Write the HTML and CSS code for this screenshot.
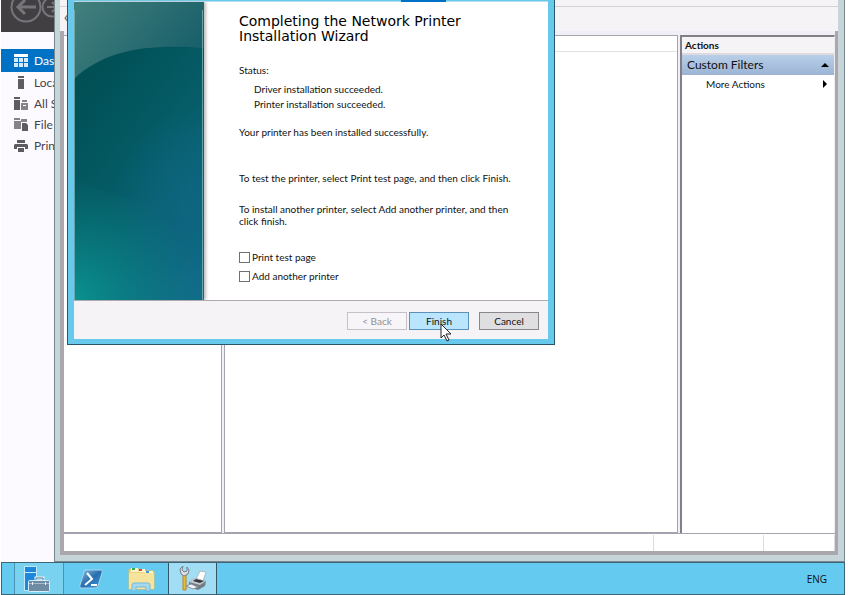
FILE: index.html
```html
<!DOCTYPE html>
<html lang="en">
<head>
<meta charset="utf-8">
<title>Print Management</title>
<link rel="stylesheet" href="styles.css">
</head>
<body>
<div class="desktop">
  <main class="workspace">
    <nav class="server-nav" aria-label="Server Manager">
      <div class="nav-header">
        <svg class="nav-arrows" viewBox="0 0 54 32" fill="none" stroke="#77757a">
          <circle cx="25" cy="7" r="14.5" stroke-width="2"/>
          <path d="M35 7H17M24 0l-7 7 7 7" stroke-width="3"/>
          <circle cx="51" cy="7" r="9.5" stroke-width="2"/>
          <path d="M46 7h9M51 2l5 5-5 5" stroke-width="2"/>
        </svg>
      </div>
      <ul class="nav-list">
        <li><a class="nav-item selected" href="#dashboard">
          <svg viewBox="0 0 14 14"><path fill="#fff" d="M0 0h14v3H0z"/><path fill="#d5eafa" d="M0 4h4v4H0zM5 4h4v4H5zM10 4h4v4h-4zM0 9h4v4H0zM5 9h4v4H5zM10 9h4v4h-4z"/></svg>Dashboard</a></li>
        <li><a class="nav-item" href="#local">
          <svg viewBox="0 0 14 14" fill="#5e5c60"><path d="M4 0h6v2H4zM4 3h6v10H4z"/></svg>Local Server</a></li>
        <li><a class="nav-item" href="#all">
          <svg viewBox="0 0 14 14" fill="#5e5c60"><path d="M0 0h6v2H0zM0 3h6v10H0z"/><path fill="#858387" d="M8 3h5v2H8zM7 6h7v7H7z"/><path fill="#fff" d="M9 8h3v1H9z"/></svg>All Servers</a></li>
        <li><a class="nav-item" href="#file">
          <svg viewBox="0 0 14 14" fill="#858387"><path d="M0 0h6v2H0zM0 3h7v8H0zM7 1h6v3H7z"/><path fill="#5e5c60" d="M8 5h4l2 2v6H8z"/></svg>File and Storage Services</a></li>
        <li><a class="nav-item" href="#print">
          <svg viewBox="0 0 14 14" fill="#5e5c60"><path d="M3 1h8v3H3zM1 5h12l1 1v4h-3V8H3v2H0V6zM4 9h6v4H4z"/></svg>Print Services</a></li>
      </ul>
    </nav>

    <section class="console" aria-label="Print Management">
      <div class="console-toolbar"><div class="menu-strip"></div><div class="tool-strip">‹</div></div>
      <div class="console-body">
        <div class="panes">
          <div class="pane tree"></div>
          <div class="pane details"><div class="column-head"></div></div>
          <aside class="pane actions">
            <h2>Actions</h2>
            <button class="action-group" type="button">Custom Filters
              <svg viewBox="0 0 8 8"><path d="M0 6l4-4 4 4z"/></svg></button>
            <button class="action-item" type="button">More Actions
              <svg viewBox="0 0 8 8"><path d="M2 0l4 4-4 4z"/></svg></button>
          </aside>
        </div>
        <div class="status-bar"><span></span><span></span><span></span></div>
      </div>
    </section>

    <form class="wizard" aria-label="Network Printer Installation Wizard">
      <div class="title-edge"><span></span></div>
      <div class="wizard-page">
        <svg class="banner" viewBox="0 0 130 298">
          <defs>
            <linearGradient id="base" x1=".2" y1="0" x2=".8" y2="1">
              <stop offset="0" stop-color="#004c50"/><stop offset=".25" stop-color="#015359"/><stop offset=".65" stop-color="#075f6c"/><stop offset="1" stop-color="#126c88"/>
            </linearGradient>
            <radialGradient id="blue" gradientUnits="userSpaceOnUse" cx="140" cy="200" r="100">
              <stop offset="0" stop-color="#0d6581"/><stop offset="1" stop-color="#0d6581" stop-opacity="0"/>
            </radialGradient>
            <radialGradient id="glow" gradientUnits="userSpaceOnUse" cx="0" cy="298" r="125">
              <stop offset="0" stop-color="#0a9190"/><stop offset="1" stop-color="#0a8183" stop-opacity="0"/>
            </radialGradient>
            <linearGradient id="sheen" x1="0" y1="0" x2="1" y2=".5">
              <stop offset="0" stop-color="#43807d"/><stop offset="1" stop-color="#19606a"/>
            </linearGradient>
          </defs>
          <rect width="130" height="298" fill="url(#base)"/>
          <rect width="130" height="298" fill="url(#blue)"/>
          <path d="M0 170q15 16 42 23l88 25v80H0z" fill="url(#glow)"/>
          <path d="M0 0h130v46C75 42 32 47 0 77z" fill="url(#sheen)"/>
          <path d="M.5 8v290M128.500 8v290" stroke="#8bb9bd" stroke-opacity=".7"/>
        </svg>
        <div class="wizard-content">
          <h1>Completing the Network Printer Installation Wizard</h1>
          <p class="status-label">Status:</p>
          <ul class="results"><li>Driver installation succeeded.</li><li>Printer installation succeeded.</li></ul>
          <p class="outcome">Your printer has been installed successfully.</p>
          <p class="hint">To test the printer, select Print test page, and then click Finish.</p>
          <p class="hint-more">To install another printer, select Add another printer, and then click finish.</p>
          <div class="options">
            <label><input type="checkbox">Print test page</label>
            <label><input type="checkbox">Add another printer</label>
          </div>
        </div>
      </div>
      <div class="wizard-footer">
        <button type="button" disabled>&lt; Back</button>
        <button type="button" class="primary">Finish</button>
        <button type="button" class="cancel">Cancel</button>
      </div>
    </form>
    <svg class="pointer" viewBox="0 0 12 19"><path d="M1 1v14l3-3 3 6 2-1-3-6h5z" fill="#fff" stroke="#222"/></svg>
  </main>

  <footer class="taskbar">
    <button class="task running" type="button" aria-label="Server Manager">
      <svg viewBox="0 0 28 28"><path d="M1.500 1.500h12v24h-12z" fill="#1d87dc" stroke="#c6e9fa"/><path d="M2 7.500h12" stroke="#c6e9fa"/><path d="M13 15v-2h7v2" fill="none" stroke="#e0f1fa" stroke-width="3"/><rect x="5.500" y="15.500" width="21" height="11" rx="1" fill="#6f8ba3" stroke="#d5edf8"/><path d="M13 15v-2h7v2" fill="none" stroke="#5d7a92"/><path d="M6 18.500h20" stroke="#a4bccd"/><path d="M9.500 17v3M22.500 17v3" stroke="#e8f1f6"/></svg>
    </button>
    <button class="task" type="button" aria-label="PowerShell">
      <svg viewBox="0 0 28 28"><defs><linearGradient id="ps" x1="0" y1="0" x2="1" y2="1"><stop offset="0" stop-color="#8ebce0"/><stop offset=".5" stop-color="#286eae"/><stop offset="1" stop-color="#3f9bd8"/></linearGradient></defs><path d="M9 5h16q2 0 1 3l-4 13q-1 2-3 2H5q-2 0-1-3L8 7q0-2 2-2z" fill="url(#ps)" stroke="#a8d5ef"/><path d="M11 8l5 6-7 6M15 20h6" fill="none" stroke="#fff" stroke-width="2"/></svg>
    </button>
    <button class="task" type="button" aria-label="File Explorer">
      <svg viewBox="0 0 28 28"><path d="M2 4h10l2 2h13v18H2z" fill="#eed481" stroke="#dabf6c"/><path d="M4 3h7v4H4zM12 4h6v3h-6zM18 6h8v3h-8z" fill="#fff5cf"/><path d="M5 3h3v2H5z" fill="#2eaf4c"/><path d="M12 4h3v2h-3z" fill="#dc4934"/><path d="M19 6h3v2h-3z" fill="#3b98d4"/><path d="M2 8h25v16H2z" fill="#f6e49d"/><path d="M5 26v-6q0-2 2-2h14q2 0 2 2v6h-4v-4H9v4z" fill="#a5d8ec" stroke="#74b9dc"/></svg>
    </button>
    <button class="task active" type="button" aria-label="Print Management">
      <svg viewBox="0 0 28 28"><path d="M4 10h3v15H4z" fill="#edbc2e" stroke="#b78624"/><path d="M4 1L1 4l1 5 3 2 4-2 1-4-2-3v4L5 7 3 5z" fill="#dedfe2" stroke="#77808a"/><path d="M17 14l4-8 6 1-3 9z" fill="#fff" stroke="#b0b9c0"/><path d="M10 17l6-4 11 3-1 5-7 4-9-3z" fill="#747b83"/><path d="M10 17l6-4 11 3-6 4z" fill="#c2c8ce"/><path d="M14 16l7 2 4-2-8-2z" fill="#34393f"/><path d="M7 21l5-2 7 3-5 2z" fill="#f1f4f7" stroke="#87909a"/></svg>
    </button>
    <span class="language">ENG</span>
  </footer>
</div>
</body>
</html>
```
FILE: styles.css
```css
* { box-sizing: border-box; }
body { margin: 0; background: #fff; color: #111; font: 10px/12px "Lato", "Open Sans", sans-serif; }
h1, h2, p, ul { margin: 0; padding: 0; font-weight: normal; }
ul { list-style: none; }
button { font: inherit; color: inherit; padding: 0; }
.desktop { display: flex; flex-direction: column; height: 100vh; padding: 0 3px 0 1px; }
.workspace { position: relative; flex: 1; min-height: 0; overflow: hidden; background: #fdfaff; }

.server-nav { width: 190px; }
.nav-header { height: 32px; background: #413f42; }
.nav-arrows { display: block; width: 54px; height: 32px; }
.nav-list { padding-top: 17px; }
.nav-item { display: flex; align-items: center; gap: 6px; height: 21px; padding-left: 13px; color: #454347; font: 12px/20px "Lato", "Open Sans", sans-serif; text-decoration: none; white-space: nowrap; }
.nav-item svg { flex: none; width: 14px; height: 14px; }
.nav-item.selected { height: 23px; background: #0072c6; color: #fff; }

.console { position: absolute; inset: 0 0 0 53px; display: flex; flex-direction: column; padding: 0 6px 6px 5px; background: #c5d5da; border: solid #78878d; border-width: 0 1px 1px; }
.console-toolbar { background: #f6f3f7; }
.menu-strip { height: 7px; border-bottom: 1px solid #d3d0d5; }
.tool-strip { height: 24px; padding: 3px 4px; color: #555; font: 14px/14px "Open Sans", sans-serif; }
.console-body { flex: 1; min-height: 0; display: flex; flex-direction: column; padding: 0 3px 4px 4px; background: #aaa8ad; }
.panes { flex: 1; min-height: 0; display: grid; grid-template-columns: 158px 1fr 155px; gap: 2px; padding-top: 4px; background: #f0eff7; }
.pane { background: #fff; border: 1px solid #a5a3ad; }
.tree { border-left: 0; }
.column-head { height: 16px; border-bottom: 1px solid #e2e0e3; }
.actions { display: flex; flex-direction: column; border: solid #828086; border-width: 2px 0 0 2px; border-right: 1px solid #eee; }
.actions h2 { height: 18px; padding: 1px 3px; border-bottom: 2px solid #dedbdf; background: #f6f3f7; font: bold 10px/14px "Lato", "Open Sans", sans-serif; }
.action-group, .action-item { display: flex; align-items: center; justify-content: space-between; border: 0; padding: 0 5px; background: none; }
.action-group { height: 20px; background: linear-gradient(#b9cfe8, #9bb4d4); font: 12px/20px "Lato", "Open Sans", sans-serif; }
.action-item { height: 18px; padding-left: 24px; }
.actions svg { width: 8px; height: 8px; }
.status-bar { display: grid; grid-template-columns: 1fr 110px 71px; height: 18px; padding-top: 1px; background: #fff; border-top: 1px solid #a5a3ad; }
.status-bar span { border-right: 1px solid #dddbdf; }

.wizard { position: absolute; top: 0; left: 66px; width: 488px; display: flex; flex-direction: column; padding: 0 6px 5px; background: #67c9ec; border: solid #28566a; border-width: 0 1px 1px; }
.title-edge { height: 2px; border-bottom: 1px solid #b6e0ef; }
.title-edge span { display: block; width: 45px; height: 2px; margin-left: 327px; background: #0072c6; }
.wizard-page { display: flex; height: 298px; background: #fff; }
.banner { flex: none; width: 130px; height: 298px; box-shadow: 2px 0 3px #bbb; }
.wizard-content { width: 309px; padding: 12px 0 0 35px; }
.wizard h1 { width: 250px; margin-bottom: 20px; font: 14px/15px "DejaVu Sans", sans-serif; color: #000; }
.results { padding: 7px 0 16px 15px; }
.results li + li { margin-top: 3px; }
.hint { margin: 34px 0 19px; white-space: nowrap; }
.options { display: grid; gap: 7px; margin-top: 24px; }
.options label { display: flex; align-items: center; gap: 2px; height: 12px; }
.options input { appearance: none; width: 11px; height: 11px; margin: 0; border: 1px solid #707070; background: #fff; }
.wizard-footer { display: flex; justify-content: flex-end; gap: 2px; height: 39px; padding: 11px 9px 0; background: #f6f3f7; border-top: 1px solid #aeabb0; }
.wizard-footer button { width: 60px; height: 18px; border: 1px solid #8a888c; background: #dfdee0; }
.wizard-footer button:disabled { border-color: #c4c2c6; background: #f7f5f8; color: #929094; }
.wizard-footer .primary { border-color: #5c91b8; background: #b9e5fe; }
.wizard-footer .cancel { margin-left: 8px; }
.pointer { position: absolute; top: 323px; left: 439px; width: 12px; height: 19px; }

.taskbar { display: flex; height: 33px; padding-left: 12px; border: 1px solid #3c6678; background: #64caef; }
.task { display: grid; place-items: center; width: 51px; height: 31px; border: 0; background: none; }
.task svg { width: 28px; height: 28px; }
.task.running { width: 50px; border: solid #4795b0; border-width: 0 1px; background: #78d2f0; padding-right: 4px; }
.task.active { width: 49px; margin-left: 2px; border: solid #315766; border-width: 0 1px; background: #a1def6; }
.language { margin: auto 17px auto auto; font: 10px/12px "Open Sans", sans-serif; }
```
